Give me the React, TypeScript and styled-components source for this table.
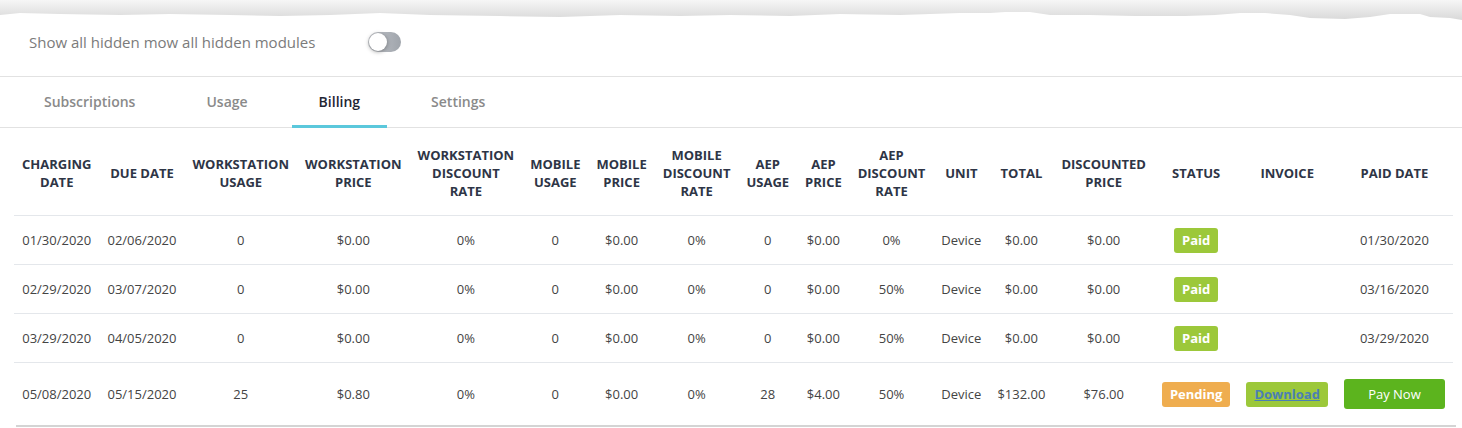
import React from "react";
import styled, { createGlobalStyle } from "styled-components";

type Status = "Paid" | "Pending";

interface BillRow {
  charging: string;
  due: string;
  wsUsage: string;
  wsPrice: string;
  wsRate: string;
  mUsage: string;
  mPrice: string;
  mRate: string;
  aepUsage: string;
  aepPrice: string;
  aepRate: string;
  unit: string;
  total: string;
  discounted: string;
  status: Status;
  invoice?: boolean;
  paidDate?: string;
}

const GlobalStyle = createGlobalStyle`
  body {
    margin: 0;
    background: #fff;
    font-family: "Open Sans", "Noto Sans", Arial, sans-serif;
  }
`;

const Page = styled.div`
  width: 1462px;
  height: 428px;
  overflow: hidden;
  background: #fff;
  display: flex;
  flex-direction: column;
`;

const TornEdge = styled.svg`
  display: block;
  width: 1462px;
  height: 20px;
  flex-shrink: 0;
`;

const ToggleRow = styled.div`
  height: 60px;
  display: flex;
  align-items: center;
  padding-left: 29px;
  gap: 53px;
  border-bottom: 1px solid #e2e2e2;
  box-sizing: border-box;
  margin-top: -3px;
  padding-bottom: 10px;
`;

const ToggleLabel = styled.span`
  font-size: 15px;
  color: #7b7b7b;
`;

const Track = styled.span`
  position: relative;
  display: inline-block;
  width: 33px;
  height: 20px;
  border-radius: 10px;
  background: linear-gradient(90deg, #c4c7cc, #9fa4ab);
`;

const Knob = styled.span`
  position: absolute;
  left: 1px;
  top: 1px;
  width: 18px;
  height: 18px;
  border-radius: 50%;
  background: #fff;
  box-shadow: 0 1px 4px rgba(0, 0, 0, 0.35);
`;

const TabBar = styled.div`
  height: 51px;
  display: flex;
  padding-left: 8.5px;
  border-bottom: 1px solid #e2e2e2;
  box-sizing: border-box;
`;

const Tab = styled.div<{ $active?: boolean }>`
  margin: 0 8.5px -1px;
  padding: 0 27px;
  display: flex;
  align-items: center;
  font-size: 14px;
  font-weight: 600;
  color: ${(p) => (p.$active ? "#1f2633" : "#8a8a8a")};
  border-bottom: 3px solid ${(p) => (p.$active ? "#5bc8dc" : "transparent")};
`;

const TableWrap = styled.div`
  padding: 3px 9px 0 14px;
`;

const Table = styled.table`
  width: 100%;
  border-collapse: collapse;
  font-size: 13px;
`;

const Th = styled.th`
  padding: 15px 8px;
  font-size: 13px;
  font-weight: 700;
  line-height: 18px;
  color: #2e3546;
  text-align: center;
  vertical-align: middle;
  border-bottom: 1px solid #e4e7eb;
`;

const Td = styled.td`
  padding: 12px 8px 11px;
  line-height: 25px;
  color: #444;
  text-align: center;
  vertical-align: middle;
  white-space: nowrap;
  border-bottom: 1px solid #e4e7eb;
  tr:last-child > & {
    border-bottom: none;
  }
`;

const Badge = styled.span<{ $tone: "green" | "orange" }>`
  display: inline-block;
  height: 25px;
  line-height: 25px;
  padding: 0 8px;
  border-radius: 3px;
  font-weight: 700;
  color: #fff;
  background: ${(p) => (p.$tone === "green" ? "#9cc83a" : "#efad4f")};
`;

const DownloadLink = styled.a`
  display: inline-block;
  height: 25px;
  line-height: 25px;
  padding: 0 8px;
  border-radius: 3px;
  font-weight: 700;
  color: #4b7fb4;
  text-decoration: underline;
  background: #9cc83a;
`;

const PayButton = styled.button`
  margin: 4px 0;
  height: 30px;
  width: 101px;
  border: none;
  border-radius: 3px;
  background: #5cb41e;
  color: #fff;
  font-family: inherit;
  font-size: 13px;
`;

const ScrollTrack = styled.div`
  margin: 1px 6px 0 16px;
  height: 2px;
  background: #d4d4d4;
`;

const headers: React.ReactNode[] = [
  "CHARGING DATE",
  "DUE DATE",
  "WORKSTATION USAGE",
  "WORKSTATION PRICE",
  "WORKSTATION DISCOUNT RATE",
  "MOBILE USAGE",
  "MOBILE PRICE",
  "MOBILE DISCOUNT RATE",
  "AEP USAGE",
  "AEP PRICE",
  "AEP DISCOUNT RATE",
  "UNIT",
  "TOTAL",
  "DISCOUNTED PRICE",
  "STATUS",
  "INVOICE",
  "PAID DATE",
];

const rows: BillRow[] = [
  {
    charging: "01/30/2020", due: "02/06/2020",
    wsUsage: "0", wsPrice: "$0.00", wsRate: "0%",
    mUsage: "0", mPrice: "$0.00", mRate: "0%",
    aepUsage: "0", aepPrice: "$0.00", aepRate: "0%",
    unit: "Device", total: "$0.00", discounted: "$0.00",
    status: "Paid", paidDate: "01/30/2020",
  },
  {
    charging: "02/29/2020", due: "03/07/2020",
    wsUsage: "0", wsPrice: "$0.00", wsRate: "0%",
    mUsage: "0", mPrice: "$0.00", mRate: "0%",
    aepUsage: "0", aepPrice: "$0.00", aepRate: "50%",
    unit: "Device", total: "$0.00", discounted: "$0.00",
    status: "Paid", paidDate: "03/16/2020",
  },
  {
    charging: "03/29/2020", due: "04/05/2020",
    wsUsage: "0", wsPrice: "$0.00", wsRate: "0%",
    mUsage: "0", mPrice: "$0.00", mRate: "0%",
    aepUsage: "0", aepPrice: "$0.00", aepRate: "50%",
    unit: "Device", total: "$0.00", discounted: "$0.00",
    status: "Paid", paidDate: "03/29/2020",
  },
  {
    charging: "05/08/2020", due: "05/15/2020",
    wsUsage: "25", wsPrice: "$0.80", wsRate: "0%",
    mUsage: "0", mPrice: "$0.00", mRate: "0%",
    aepUsage: "28", aepPrice: "$4.00", aepRate: "50%",
    unit: "Device", total: "$132.00", discounted: "$76.00",
    status: "Pending", invoice: true,
  },
];

const tabs = ["Subscriptions", "Usage", "Billing", "Settings"];

const App: React.FC = () => {
  return (
    <Page>
      <GlobalStyle />
      <TornEdge viewBox="0 0 1462 20" preserveAspectRatio="none">
        <defs>
          <linearGradient id="torn" x1="0" y1="0" x2="0" y2="1">
            <stop offset="0" stopColor="#f6f6f6" />
            <stop offset="1" stopColor="#d8d8d8" />
          </linearGradient>
        </defs>
        <path
          d="M0 0 H1462 V20 L1450 18 L1430 17 L1420 14 L1390 14 L1370 17 L1345 19 L1310 18 L1290 15 L1265 13 L1240 13 L1215 15 L1185 16 L1135 16 L1090 15 L1050 15 L1030 12 L1005 12 L990 13 L960 13 L900 15 L840 14 L790 16 L730 15 L680 16 L620 15 L560 17 L500 16 L430 15 L380 13 L330 15 L280 16 L230 15 L170 14 L120 15 L60 14 L20 13 L0 15 Z"
          fill="url(#torn)"
        />
      </TornEdge>
      <ToggleRow>
        <ToggleLabel>Show all hidden mow all hidden modules</ToggleLabel>
        <Track>
          <Knob />
        </Track>
      </ToggleRow>
      <TabBar>
        {tabs.map((t) => (
          <Tab key={t} $active={t === "Billing"}>
            {t}
          </Tab>
        ))}
      </TabBar>
      <TableWrap>
        <Table>
          <thead>
            <tr>
              {headers.map((h, i) => (
                <Th key={i}>{h}</Th>
              ))}
            </tr>
          </thead>
          <tbody>
            {rows.map((r) => (
              <tr key={r.charging}>
                <Td>{r.charging}</Td>
                <Td>{r.due}</Td>
                <Td>{r.wsUsage}</Td>
                <Td>{r.wsPrice}</Td>
                <Td>{r.wsRate}</Td>
                <Td>{r.mUsage}</Td>
                <Td>{r.mPrice}</Td>
                <Td>{r.mRate}</Td>
                <Td>{r.aepUsage}</Td>
                <Td>{r.aepPrice}</Td>
                <Td>{r.aepRate}</Td>
                <Td>{r.unit}</Td>
                <Td>{r.total}</Td>
                <Td>{r.discounted}</Td>
                <Td>
                  <Badge $tone={r.status === "Paid" ? "green" : "orange"}>
                    {r.status}
                  </Badge>
                </Td>
                <Td>{r.invoice && <DownloadLink href="#">Download</DownloadLink>}</Td>
                <Td>{r.paidDate ? r.paidDate : <PayButton>Pay Now</PayButton>}</Td>
              </tr>
            ))}
          </tbody>
        </Table>
      </TableWrap>
      <ScrollTrack />
    </Page>
  );
};

export default App;
